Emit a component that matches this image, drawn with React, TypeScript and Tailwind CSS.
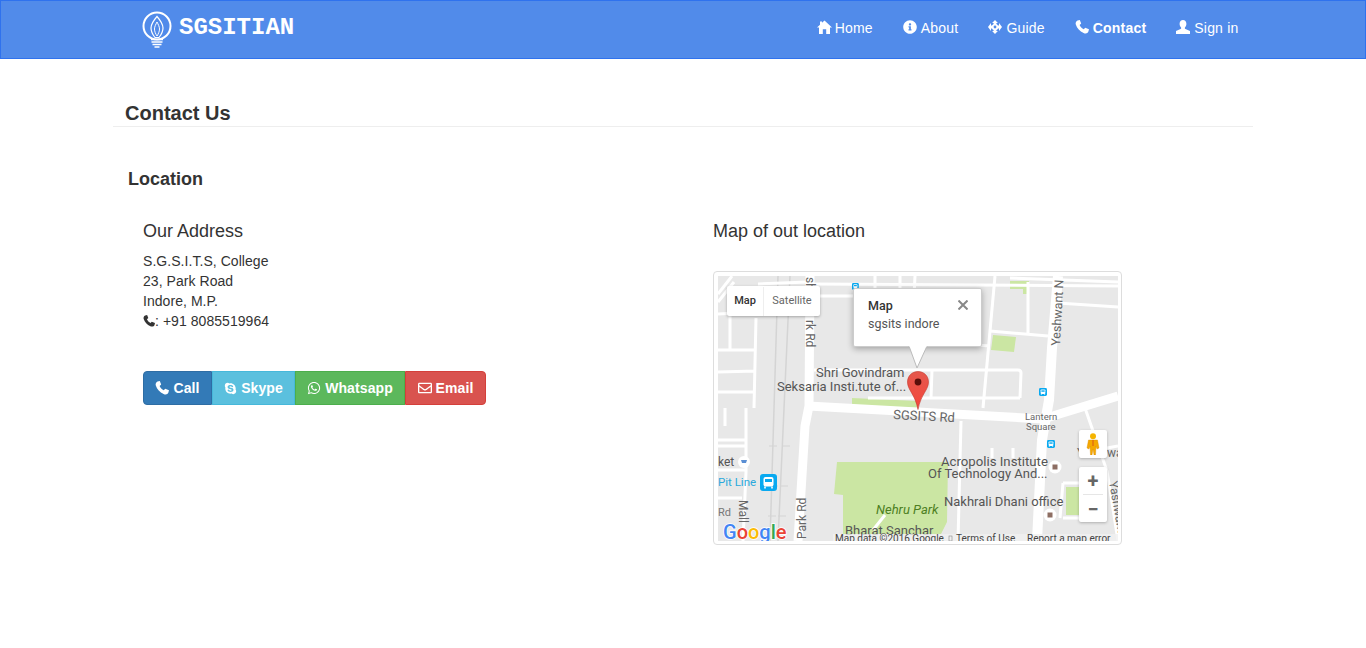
import React from 'react';
import { FaInfoCircle, FaSkype, FaWhatsapp, FaRegEnvelope } from 'react-icons/fa';

const BulbLogo = () => (
  <svg width="32" height="38" viewBox="0 0 32 38" fill="none" stroke="white" className="shrink-0">
    <circle cx="16" cy="15" r="13.5" strokeWidth="2" />
    <path d="M16 5.500c-3.500 4-6 7.500-6 11.500 0 4 2 7 4 9.500h4c2-2.500 4-5.500 4-9.500 0-4-2.500-7.500-6-11.500z" strokeWidth="1.200" />
    <path d="M16 11c-1.200 2.500-2.500 4.500-2.500 7s1.200 5 2.500 7c1.300-2 2.500-4.500 2.500-7s-1.300-4.500-2.500-7z" strokeWidth="1" />
    <path d="M10 28.500h12M10.500 31h11M11.500 33.500h9M13.500 36h5" strokeWidth="1.600" />
  </svg>
);

const HomeIcon = () => (
  <svg width="15" height="14" viewBox="0 0 15 14" fill="white" className="shrink-0 -mr-px">
    <path d="M7.500 0.500L15 7.500h-2v6.500H9.200V9.200H5.800V14H2V7.500H0L3 4.700V1.500h2v1.300z" />
  </svg>
);

const MoveIcon = () => (
  <svg width="14" height="14" viewBox="0 0 14 14" fill="white" className="shrink-0">
    <path d="M7 0l2.900 3H8.400v1A3.300 3.300 0 0 1 10 5.600h1V3.100L14 7l-3 3.900V8.400h-1A3.300 3.300 0 0 1 8.400 10v1h1.500L7 14l-2.900-3h1.500v-1A3.300 3.300 0 0 1 4 8.400H3v2.500L0 7l3-3.900v2.500h1A3.300 3.300 0 0 1 5.600 4V3H4.100z" />
    <circle cx="7" cy="7" r="1.400" fill="#518bea" />
  </svg>
);

const PhoneIcon = ({ size = 14 }: { size?: number }) => (
  <svg width={size} height={size} viewBox="0 0 14 14" fill="currentColor" className="shrink-0">
    <path d="M2.500 0.500L4.800 0L6.200 3.600L4.600 5C5.200 6.600 7 8.600 8.800 9.300L10.200 7.800L14 9.200L13.400 11.600C12.800 13.500 10.500 14 8.600 13C4.800 11.400 2 8.400 0.800 4.600C0.300 3 1 1.200 2.500 0.500Z" />
  </svg>
);

const UserIcon = () => (
  <svg width="14" height="14" viewBox="0 0 14 14" fill="white" className="shrink-0">
    <path d="M7 0c2 0 3.400 1.500 3.400 3.700 0 1.600-.7 3-1.500 3.800v1.200L14 11v3H0v-3l5.100-2.300V7.500C4.300 6.700 3.600 5.300 3.600 3.700 3.600 1.500 5 0 7 0z" />
  </svg>
);

const NavItem = ({ icon, label, active }: { icon: React.ReactNode; label: string; active?: boolean }) => (
  <a className={`flex items-center gap-[4px] text-white text-[14px] tracking-[0.2px] ${active ? 'font-bold' : ''}`}>
    <span className="flex -translate-y-[2px]">{icon}</span>
    <span>{label}</span>
  </a>
);

const BusIcon = ({ x, y, s }: { x: number; y: number; s: number }) => (
  <g transform={`translate(${x} ${y}) scale(${s})`}>
    <rect width="17" height="17" rx="3" fill="#09a9f0" />
    <rect x="3.500" y="3" width="10" height="9.500" rx="2" fill="white" />
    <rect x="5" y="5" width="7" height="3" fill="#09a9f0" />
    <path d="M5 12.500v2M12 12.500v2" stroke="white" strokeWidth="1.600" />
  </g>
);

const MapDrawing = () => (
  <svg width="400" height="265" viewBox="0 0 400 265" className="block">
    <rect width="400" height="265" fill="#e8e8e8" />
    {/* parks */}
    <path d="M119 186h111l-1 60-6 12H125v-39l-9-1z" fill="#cbe6a3" />
    <path d="M292 5h19v13h-6v-5h-13z" fill="#cbe6a3" />
    <path d="M275 59l23 2-2 15-23-2z" fill="#cbe6a3" />
    <path d="M134 122l66 3v7l-66-3z" fill="#cbe6a3" />
    <path d="M348 211h15v28h-15z" fill="#cbe6a3" />
    {/* rail lines */}
    <g stroke="#d4d4d4" strokeWidth="1.500" fill="none">
      <path d="M60 0L52 265M72 0L60 265" />
      <path d="M51 170h8M64 170h8M52 210h8M62 210h8M50 240h8M60 240h8" strokeWidth="1" />
    </g>
    {/* minor roads */}
    <g stroke="white" strokeWidth="3" fill="none">
      <path d="M0 26L16 6M14 0L0 18" />
      <path d="M12 40v34M38 42l-2 90M0 38l40-2M0 74h38M0 96l38-1M0 116h36" />
      <path d="M7 132v18M28 132v64l-3 69M0 164h28M0 170h28M0 194h28M0 222h24" />
      <path d="M40 8l50-2M96 8l304 2M96 20h40" />
      <path d="M157 0v24M182 0v24M197 0l-1 20" />
      <path d="M277 0L265 132" />
      <path d="M243 145l-3 120" />
      <path d="M292 2l108 4M310 6v52M272 55l58 5M340 27l60 4M258 69l14 1" />
      <path d="M96 94l204 0c2 0 3 1 3 3l-1 25M150 122h152M214 94l-1 28" />
      <path d="M367 132l22 63 11 70" />
      <path d="M274 172v10M295 172v10" />
      <path d="M345 207h20M345 207l-3 35M345 242h20M389 172l11-2" />
      <path d="M167 239l-12 15" />
    </g>
    {/* main roads */}
    <g stroke="white" fill="none">
      <path d="M92 0l-1 130-4 20-7 115" strokeWidth="9" />
      <path d="M90 130l235 13 75-23" strokeWidth="9" />
      <path d="M340 0l-6 72-3 52-7 40-5 101" strokeWidth="10" />
    </g>
    {/* labels */}
    <g fontFamily="Roboto, sans-serif" fill="#555">
      <text x="98" y="101" fontSize="13">Shri Govindram</text>
      <text x="59" y="115" fontSize="13">Seksaria Insti.tute of...</text>
      <text x="175" y="143" fontSize="13" transform="rotate(3 175 143)" fill="#666">SGSITS Rd</text>
      <text x="307" y="144" fontSize="9.500" fill="#666">Lantern</text>
      <text x="308" y="154" fontSize="9.500" fill="#666">Square</text>
      <text x="223" y="190" fontSize="13.200">Acropolis Institute</text>
      <text x="210" y="202" fontSize="13">Of Technology And...</text>
      <text x="226" y="230" fontSize="13">Nakhrali Dhani office</text>
      <text x="127" y="259" fontSize="13">Bharat Sanchar</text>
      <text x="0" y="190" fontSize="12">ket</text>
      <text x="0" y="210" fontSize="11.500" fill="#2aa8dc">Pit Line</text>
      <text x="0" y="240" fontSize="11" fill="#777">Rd</text>
      <text x="158" y="238" fontSize="13" fontStyle="italic" fill="#4d7f1f">Nehru Park</text>
      <text fontSize="12.500" fill="#666" transform="translate(342 70) rotate(-87)">Yeshwant N</text>
      <text fontSize="12" fill="#666" transform="translate(88 44) rotate(90)">rk Rd</text>
      <text fontSize="12" fill="#666" transform="translate(88 1) rotate(90)">sh</text>
      <text fontSize="12" fill="#666" transform="translate(88 263) rotate(-90)">Park Rd</text>
      <text fontSize="12" fill="#666" transform="translate(21 224) rotate(90)">Mall</text>
      <text fontSize="12" fill="#666" transform="translate(391 206) rotate(80)">Yashwant</text>
      <text x="359" y="181" fontSize="12" fill="#666">Y</text>
      <text x="389" y="181" fontSize="12" fill="#666">wa</text>
    </g>
    {/* poi markers */}
    <BusIcon x={321} y={112} s={0.47} />
    <BusIcon x={329} y={164} s={0.47} />
    <BusIcon x={134} y={7} s={0.4} />
    <BusIcon x={42} y={198} s={1} />
    <circle cx="26" cy="186" r="6" fill="white" />
    <path d="M23 184h6l-1 3h-4z" fill="#5b8fd4" />
    <circle cx="337" cy="191" r="6.500" fill="white" />
    <rect x="334.500" y="188.500" width="5" height="5" fill="#8d6e63" />
    <circle cx="332" cy="239" r="6.500" fill="white" />
    <rect x="329.500" y="236.500" width="5" height="5" fill="#8d6e63" />
    {/* google logo */}
    <text x="5" y="263" fontFamily="Roboto, sans-serif" fontSize="20" fontWeight="500" stroke="white" strokeWidth="1.500" paintOrder="stroke">
      <tspan fill="#4285f4">G</tspan>
      <tspan fill="#ea4335">o</tspan>
      <tspan fill="#fbbc05">o</tspan>
      <tspan fill="#4285f4">g</tspan>
      <tspan fill="#34a853">l</tspan>
      <tspan fill="#ea4335">e</tspan>
    </text>
    {/* footer strip */}
    <rect x="115" y="258" width="285" height="7" fill="#f0f0f0" fillOpacity="0.8" />
    <text x="117" y="266" fontFamily="Roboto, sans-serif" fontSize="10" fill="#444">Map data ©2016 Google</text>
    <rect x="231" y="260" width="3" height="5" fill="none" stroke="#888" strokeWidth="0.600" />
    <text x="238" y="266" fontFamily="Roboto, sans-serif" fontSize="10" fill="#444">Terms of Use</text>
    <text x="309" y="266" fontFamily="Roboto, sans-serif" fontSize="10" fill="#444">Report a map error</text>
  </svg>
);

const MapPin = () => (
  <svg width="22" height="39" viewBox="0 0 22 39">
    <defs>
      <linearGradient id="pin" x1="0" y1="0" x2="0" y2="1">
        <stop offset="0" stopColor="#e4584c" />
        <stop offset="1" stopColor="#f5463c" />
      </linearGradient>
    </defs>
    <path d="M11 0.500C5 0.500 0.500 5 0.500 11c0 8 7.500 12 10.500 27.500C14 23 21.500 19 21.500 11 21.500 5 17 0.500 11 0.500z" fill="url(#pin)" stroke="#c4392e" strokeWidth="0.600" />
    <circle cx="11" cy="11" r="3.400" fill="#5a0f0a" />
  </svg>
);

const Pegman = () => (
  <svg width="14" height="22" viewBox="0 0 14 22">
    <circle cx="7" cy="3.200" r="3" fill="#f5b400" />
    <path d="M2.500 7h9l1.500 8-2 1-1-3-.5 9H8l-1-6-1 6H4.500l-.5-9-1 3-2-1z" fill="#f5a800" stroke="#d98c00" strokeWidth="0.400" />
    <path d="M7 7v6" stroke="#d8541a" />
  </svg>
);

const MapBox = () => (
  <div className="mt-[30px] w-[409px] h-[274px] p-[4px] border border-[#dddddd] rounded-[4px] bg-white">
    <div className="relative w-[400px] h-[265px] overflow-hidden">
      <MapDrawing />

      {/* map type */}
      <div className="absolute left-[9px] top-[10px] h-[30px] pt-[1px] flex bg-white rounded-[2px] shadow-[0_1px_3px_rgba(0,0,0,0.3)] text-[11px] font-['Roboto',sans-serif]">
        <span className="w-[37px] flex items-center justify-center font-medium text-[#333] border-r border-[#eeeeee]">Map</span>
        <span className="w-[56px] flex items-center justify-center text-[#666]">Satellite</span>
      </div>

      {/* info window */}
      <div className="absolute left-[135px] top-[12px] w-[129px] h-[59px] bg-white rounded-[2px] border border-[#cccccc] shadow-[0_2px_6px_rgba(0,0,0,0.3)] pl-[14px] pt-[8px] font-['Roboto',sans-serif] text-[12.5px] text-[#555]">
        <div className="font-medium text-[#333] leading-[17px]">Map</div>
        <div className="leading-[18px] mt-[1px]">sgsits indore</div>
        <svg className="absolute left-[104px] top-[11px]" width="10" height="10" viewBox="0 0 10 10">
          <path d="M0.500 0.500l9 9M9.500 0.500l-9 9" stroke="#888" strokeWidth="2" />
        </svg>
      </div>
      <svg className="absolute left-[190px] top-[69px]" width="22" height="25" viewBox="0 0 22 25">
        <path d="M1 1L9 23 19 1" fill="white" stroke="#bbbbbb" />
        <path d="M1.500 1h17" stroke="white" strokeWidth="2" />
      </svg>

      <div className="absolute left-[189px] top-[95px]">
        <MapPin />
      </div>

      {/* street view + zoom */}
      <div className="absolute left-[361px] top-[154px] w-[28px] h-[28px] bg-white rounded-[2px] shadow-[0_1px_3px_rgba(0,0,0,0.25)] flex items-center justify-center">
        <Pegman />
      </div>
      <div className="absolute left-[361px] top-[191px] w-[28px] h-[55px] bg-white rounded-[2px] shadow-[0_1px_3px_rgba(0,0,0,0.25)] flex flex-col items-center font-['Roboto',sans-serif] text-[#666] font-bold">
        <span className="h-[27px] flex items-center text-[20px] leading-none">+</span>
        <span className="w-[20px] h-px bg-[#e6e6e6]" />
        <span className="h-[27px] flex items-center text-[20px] leading-none">−</span>
      </div>
    </div>
  </div>
);

const ContactButton = ({ icon, label, className }: { icon: React.ReactNode; label: string; className: string }) => (
  <a className={`h-[34px] flex items-center justify-center gap-[4px] border text-white text-[14px] font-bold tracking-[0.1px] ${className}`}>
    {icon}
    <span>{label}</span>
  </a>
);

export default function App() {
  return (
    <div className="min-h-[648px] bg-white text-[#333333] font-['Liberation_Sans',Arial,sans-serif]">
      <nav className="h-[59px] bg-[#518bea] border border-[#2f72ee]">
        <div className="w-[1140px] mx-auto h-full flex items-center justify-between -translate-x-px">
          <div className="flex items-center gap-[6px] pl-[29px] pt-[1px]">
            <BulbLogo />
            <span className="text-white text-[24px] font-bold font-['Liberation_Mono',monospace] -mt-[4px]">SGSITIAN</span>
          </div>
          <div className="flex items-center gap-[30px] pr-[13.5px] -mt-[2px]">
            <NavItem icon={<HomeIcon />} label="Home" />
            <NavItem icon={<FaInfoCircle size={14} />} label="About" />
            <NavItem icon={<MoveIcon />} label="Guide" />
            <NavItem icon={<PhoneIcon />} label="Contact" active />
            <NavItem icon={<UserIcon />} label="Sign in" />
          </div>
        </div>
      </nav>

      <main className="w-[1140px] mx-auto">
        <h1 className="mt-[42px] h-[25px] pl-[12px] text-[20px] leading-[24px] font-bold border-b border-[#eeeeee] box-content">Contact Us</h1>
        <h2 className="mt-[42px] pl-[15px] text-[18px] leading-[20px] font-bold">Location</h2>

        <div className="mt-[32px] pl-[30px] flex">
          <section className="w-[570px]">
            <h3 className="text-[18px] leading-[20px]">Our Address</h3>
            <div className="mt-[10px] text-[14px] leading-[20px] tracking-[0.05px]">
              <p>S.G.S.I.T.S, College</p>
              <p>23, Park Road</p>
              <p>Indore, M.P.</p>
              <p className="flex items-center">
                <PhoneIcon size={12} />
                <span>: +91 8085519964</span>
              </p>
            </div>
            <div className="mt-[40px] flex">
              <ContactButton icon={<PhoneIcon />} label="Call" className="w-[69px] bg-[#337ab7] border-[#2e6da4] rounded-l-[4px]" />
              <ContactButton icon={<FaSkype size={13} />} label="Skype" className="w-[83px] bg-[#5bc0de] border-[#46b8da]" />
              <ContactButton icon={<FaWhatsapp size={14} />} label="Whatsapp" className="w-[110px] bg-[#5cb85c] border-[#4cae4c] gap-[3px]" />
              <ContactButton icon={<FaRegEnvelope size={14} />} label="Email" className="w-[81px] bg-[#d9534f] border-[#d43f3a] rounded-r-[4px]" />
            </div>
          </section>
          <section>
            <h3 className="text-[18px] leading-[20px]">Map of out location</h3>
            <MapBox />
          </section>
        </div>
      </main>
    </div>
  );
}
